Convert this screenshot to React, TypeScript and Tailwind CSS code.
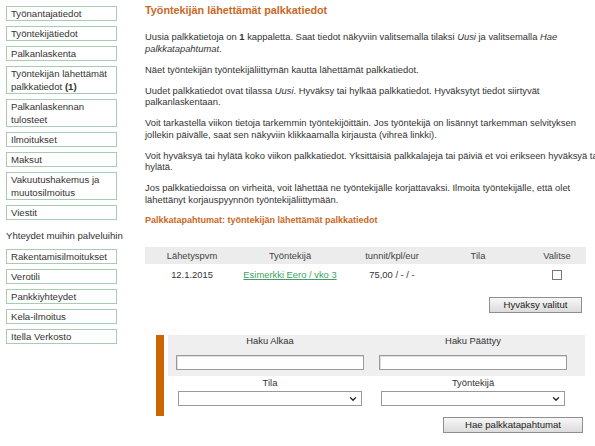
import { ChevronDown } from "lucide-react";

const menuTop = [
  "Työnantajatiedot",
  "Työntekijätiedot",
  "Palkanlaskenta",
  "Työntekijän lähettämät palkkatiedot (1)",
  "Palkanlaskennan tulosteet",
  "Ilmoitukset",
  "Maksut",
  "Vakuutushakemus ja muutosilmoitus",
  "Viestit",
];

const menuLinks = ["Rakentamisilmoitukset", "Verotili", "Pankkiyhteydet", "Kela-ilmoitus", "Itella Verkosto"];

function MenuBox({ label }: { label: string }) {
  const bold = label.endsWith("(1)");
  const text = bold ? label.slice(0, -3) : label;
  return (
    <div className="w-[111px] border border-[#a9cbb1] px-[4px] leading-[13px] text-[9.6px] text-[#333]">
      {text}
      {bold && <b>(1)</b>}
    </div>
  );
}

function Button({ label, width }: { label: string; width: string }) {
  return (
    <button
      className={`${width} h-[16px] border border-[#8e8e8e] bg-gradient-to-b from-[#f7f7f7] to-[#dcdcdc] text-[9.6px] leading-[14px] text-[#222]`}
    >
      {label}
    </button>
  );
}

function SelectBox() {
  return (
    <div className="relative h-[15px] w-[184px]">
      <select className="h-full w-full appearance-none border border-[#9a9a9a] bg-white" />
      <ChevronDown className="pointer-events-none absolute right-[4px] top-[3px] h-[10px] w-[10px] text-[#222]" strokeWidth={3} />
    </div>
  );
}

export default function App() {
  return (
    <div className="flex h-[446px] w-[595px] overflow-hidden bg-white font-['Liberation_Sans',Arial,sans-serif] text-[#333]">
      <aside className="flex w-[145px] shrink-0 flex-col gap-[5px] pl-[6px] pt-[6px]">
        {menuTop.map((m) => (
          <MenuBox key={m} label={m} />
        ))}
        <p className="mb-[2px] mt-[4px] whitespace-nowrap text-[9.6px] leading-[13px]">Yhteydet muihin palveluihin</p>
        {menuLinks.map((m) => (
          <MenuBox key={m} label={m} />
        ))}
      </aside>

      <main className="flex w-[458px] shrink-0 flex-col pt-[3px] text-[9.4px] leading-[11.5px]">
        <h1 className="text-[10.8px] font-bold leading-[14px] text-[#c9681f]">Työntekijän lähettämät palkkatiedot</h1>
        <div className="mt-[14px] flex flex-col gap-[9.5px]">
          <p>
            Uusia palkkatietoja on <b>1</b> kappaletta. Saat tiedot näkyviin valitsemalla tilaksi <i>Uusi</i> ja
            valitsemalla <i>Hae palkkatapahtumat</i>.
          </p>
          <p>Näet työntekijän työntekijäliittymän kautta lähettämät palkkatiedot.</p>
          <p>
            Uudet palkkatiedot ovat tilassa <i>Uusi</i>. Hyväksy tai hylkää palkkatiedot. Hyväksytyt tiedot siirtyvät
            palkanlaskentaan.
          </p>
          <p>
            Voit tarkastella viikon tietoja tarkemmin työntekijöittäin. Jos työntekijä on lisännyt tarkemman selvityksen
            jollekin päivälle, saat sen näkyviin klikkaamalla kirjausta (vihreä linkki).
          </p>
          <p>
            Voit hyväksyä tai hylätä koko viikon palkkatiedot. Yksittäisiä palkkalajeja tai päiviä et voi erikseen
            hyväksyä tai hylätä.
          </p>
          <p>
            Jos palkkatiedoissa on virheitä, voit lähettää ne työntekijälle korjattavaksi. Ilmoita työntekijälle, että olet
            lähettänyt korjauspyynnön työntekijäliittymään.
          </p>
          <p className="text-[9px] font-bold text-[#c9681f]">Palkkatapahtumat: työntekijän lähettämät palkkatiedot</p>
        </div>

        <div className="mt-[21px] flex w-[441px] flex-col">
          <div className="grid h-[17px] grid-cols-[94px_102px_102px_70px_73px] items-center bg-[#ececec] text-center text-[#444]">
            <span>Lähetyspvm</span>
            <span>Työntekijä</span>
            <span>tunnit/kpl/eur</span>
            <span>Tila</span>
            <span className="pl-[15px]">Valitse</span>
          </div>
          <div className="grid h-[22px] grid-cols-[94px_102px_102px_70px_73px] items-center text-center">
            <span>12.1.2015</span>
            <span className="text-[#3f9f63] underline">Esimerkki Eero / vko 3</span>
            <span>75,00 / - / -</span>
            <span />
            <span className="flex justify-center pl-[15px]">
              <span className="h-[10px] w-[10px] border border-[#777] bg-white" />
            </span>
          </div>
          <div className="mr-[4px] mt-[11px] flex justify-end">
            <Button label="Hyväksy valitut" width="w-[93px]" />
          </div>

          <div className="ml-[11px] mt-[22px] flex">
            <div className="w-[8px] bg-[#cc6600]" />
            <div className="ml-[4px] w-[417px]">
              <div className="grid h-[41px] grid-cols-[188px_188px] gap-x-[15px] bg-[#efefef] pl-[8px]">
                <span className="text-center leading-[12px]">Haku Alkaa</span>
                <span className="text-center leading-[12px]">Haku Päättyy</span>
                <input className="mt-[2px] h-[15px] border border-[#9a9a9a] bg-white shadow-[inset_1px_1px_0_#ddd]" />
                <input className="mt-[2px] h-[15px] border border-[#9a9a9a] bg-white shadow-[inset_1px_1px_0_#ddd]" />
              </div>
              <div className="grid grid-cols-[184px_184px] gap-x-[19px] pb-[10px] pl-[10px] pt-[1px]">
                <span className="text-center leading-[12px]">Tila</span>
                <span className="text-center leading-[12px]">Työntekijä</span>
                <div className="mt-[2px]">
                  <SelectBox />
                </div>
                <div className="mt-[2px]">
                  <SelectBox />
                </div>
              </div>
            </div>
          </div>
          <div className="mr-[3px] mt-[1px] flex justify-end">
            <Button label="Hae palkkatapahtumat" width="w-[140px]" />
          </div>
        </div>
      </main>
    </div>
  );
}
